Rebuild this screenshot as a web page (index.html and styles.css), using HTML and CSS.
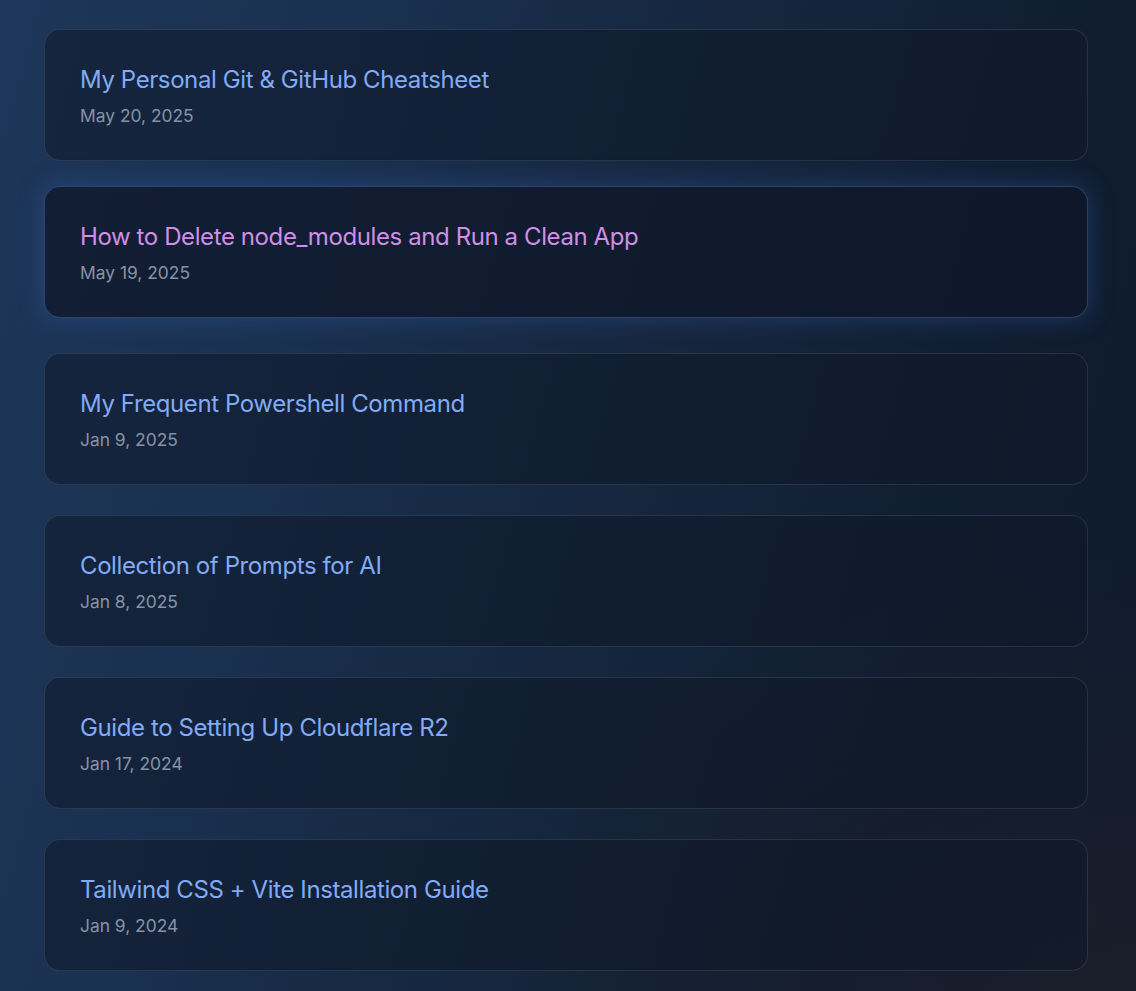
FILE: index.html
```html
<!DOCTYPE html>
<html lang="en">
<head>
<meta charset="utf-8">
<title>Posts</title>
<link rel="stylesheet" href="styles.css">
</head>
<body>
<main class="page">
  <ul class="post-list">
    <li class="post-card">
      <a class="post-title" href="#">My Personal Git &amp; GitHub Cheatsheet</a>
      <time class="post-date">May 20, 2025</time>
    </li>
    <li class="post-card is-hover">
      <a class="post-title" href="#">How to Delete node_modules and Run a Clean App</a>
      <time class="post-date">May 19, 2025</time>
    </li>
    <li class="post-card">
      <a class="post-title" href="#">My Frequent Powershell Command</a>
      <time class="post-date">Jan 9, 2025</time>
    </li>
    <li class="post-card">
      <a class="post-title" href="#">Collection of Prompts for AI</a>
      <time class="post-date">Jan 8, 2025</time>
    </li>
    <li class="post-card">
      <a class="post-title" href="#">Guide to Setting Up Cloudflare R2</a>
      <time class="post-date">Jan 17, 2024</time>
    </li>
    <li class="post-card">
      <a class="post-title" href="#">Tailwind CSS + Vite Installation Guide</a>
      <time class="post-date">Jan 9, 2024</time>
    </li>
  </ul>
</main>
</body>
</html>
```

FILE: styles.css
```css
* { box-sizing: border-box; }

html, body {
  margin: 0;
  height: 100%;
}

body {
  font-family: Inter, "Noto Sans", sans-serif;
  background:
    radial-gradient(ellipse 60% 45% at 100% 100%, rgba(28, 30, 42, 0.9), rgba(28, 30, 42, 0) 100%),
    linear-gradient(105deg, #1e3659 0%, #1a3151 25%, #15263d 55%, #101d30 80%, #0e1b2d 100%);
  min-height: 991px;
  overflow: hidden;
}

.page {
  padding: 29px 48px 0 44px;
}

.post-list {
  list-style: none;
  margin: 0;
  padding: 0;
  display: flex;
  flex-direction: column;
  gap: 30px;
}

.post-card {
  height: 132px;
  padding: 34px 35px 0;
  border: 1px solid rgba(148, 163, 184, 0.18);
  border-radius: 16px;
  background: rgba(15, 23, 40, 0.55);
  display: flex;
  flex-direction: column;
}

.post-card.is-hover {
  transform: translateY(-5px);
  border-color: rgba(96, 140, 220, 0.35);
  background: rgba(15, 23, 40, 0.75);
  box-shadow: 0 0 26px rgba(59, 110, 200, 0.35);
}

.post-title {
  font-size: 24px;
  line-height: 32px;
  color: #82abf7;
  text-decoration: none;
  letter-spacing: -0.4px;
}

.is-hover .post-title {
  color: #cf8fe6;
}

.post-date {
  margin-top: 8px;
  font-size: 17.4px;
  line-height: 24px;
  color: #8792a4;
}
```
